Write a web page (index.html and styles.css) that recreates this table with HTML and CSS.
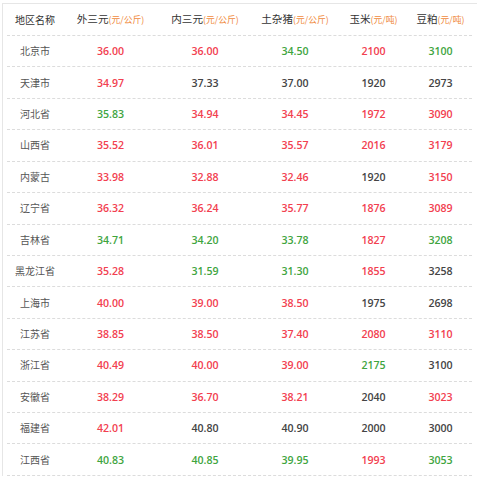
FILE: index.html
```html
<!DOCTYPE html>
<html lang="zh">
<head>
<meta charset="utf-8">
<title>价格</title>
<link rel="stylesheet" href="styles.css">
</head>
<body>
<div class="box">
  <div class="row head">
    <div class="c c1">地区名称</div>
    <div class="c c2">外三元<span class="u">(元/公斤)</span></div>
    <div class="c c3">内三元<span class="u">(元/公斤)</span></div>
    <div class="c c4">土杂猪<span class="u">(元/公斤)</span></div>
    <div class="c c5">玉米<span class="u">(元/吨)</span></div>
    <div class="c c6">豆粕<span class="u">(元/吨)</span></div>
  </div>
  <div class="row"><div class="c c1">北京市</div><div class="c c2 r">36.00</div><div class="c c3 r">36.00</div><div class="c c4 g">34.50</div><div class="c c5 r">2100</div><div class="c c6 g">3100</div></div>
  <div class="row"><div class="c c1">天津市</div><div class="c c2 r">34.97</div><div class="c c3 d">37.33</div><div class="c c4 d">37.00</div><div class="c c5 d">1920</div><div class="c c6 d">2973</div></div>
  <div class="row"><div class="c c1">河北省</div><div class="c c2 g">35.83</div><div class="c c3 r">34.94</div><div class="c c4 r">34.45</div><div class="c c5 r">1972</div><div class="c c6 r">3090</div></div>
  <div class="row"><div class="c c1">山西省</div><div class="c c2 r">35.52</div><div class="c c3 r">36.01</div><div class="c c4 r">35.57</div><div class="c c5 r">2016</div><div class="c c6 r">3179</div></div>
  <div class="row"><div class="c c1">内蒙古</div><div class="c c2 r">33.98</div><div class="c c3 r">32.88</div><div class="c c4 r">32.46</div><div class="c c5 d">1920</div><div class="c c6 r">3150</div></div>
  <div class="row"><div class="c c1">辽宁省</div><div class="c c2 r">36.32</div><div class="c c3 r">36.24</div><div class="c c4 r">35.77</div><div class="c c5 r">1876</div><div class="c c6 r">3089</div></div>
  <div class="row"><div class="c c1">吉林省</div><div class="c c2 g">34.71</div><div class="c c3 g">34.20</div><div class="c c4 g">33.78</div><div class="c c5 r">1827</div><div class="c c6 g">3208</div></div>
  <div class="row"><div class="c c1">黑龙江省</div><div class="c c2 r">35.28</div><div class="c c3 g">31.59</div><div class="c c4 g">31.30</div><div class="c c5 r">1855</div><div class="c c6 d">3258</div></div>
  <div class="row"><div class="c c1">上海市</div><div class="c c2 r">40.00</div><div class="c c3 r">39.00</div><div class="c c4 r">38.50</div><div class="c c5 d">1975</div><div class="c c6 d">2698</div></div>
  <div class="row"><div class="c c1">江苏省</div><div class="c c2 r">38.85</div><div class="c c3 r">38.50</div><div class="c c4 r">37.40</div><div class="c c5 r">2080</div><div class="c c6 r">3110</div></div>
  <div class="row"><div class="c c1">浙江省</div><div class="c c2 r">40.49</div><div class="c c3 r">40.00</div><div class="c c4 r">39.00</div><div class="c c5 g">2175</div><div class="c c6 d">3100</div></div>
  <div class="row"><div class="c c1">安徽省</div><div class="c c2 r">38.29</div><div class="c c3 r">36.70</div><div class="c c4 r">38.21</div><div class="c c5 d">2040</div><div class="c c6 r">3023</div></div>
  <div class="row"><div class="c c1">福建省</div><div class="c c2 r">42.01</div><div class="c c3 d">40.80</div><div class="c c4 d">40.90</div><div class="c c5 d">2000</div><div class="c c6 d">3000</div></div>
  <div class="row"><div class="c c1">江西省</div><div class="c c2 g">40.83</div><div class="c c3 g">40.85</div><div class="c c4 g">39.95</div><div class="c c5 r">1993</div><div class="c c6 g">3053</div></div>
</div>
</body>
</html>
```
FILE: styles.css
```css
html, body {
  margin: 0;
  padding: 0;
  background: #fff;
}
body {
  font-family: "Noto Sans CJK SC", "Noto Sans", sans-serif;
  color: #333;
}
.box {
  margin: 3px 0 0 2px;
  border-left: 1px solid #e6e6e6;
  border-top: 1px solid #e6e6e6;
  padding-left: 4px;
  width: 470px;
}
.row {
  display: flex;
  align-items: center;
  height: 31.43px;
  box-sizing: border-box;
  border-bottom: 1px dashed #dcdcdc;
  width: 465px;
}
.row.head {
  height: 32px;
}
.c {
  text-align: center;
  white-space: nowrap;
  font-size: 10.5px;
  line-height: 14px;
}
.c1 { width: 56px; color: #555; font-size: 10px; }
.c2 { width: 95px; }
.c3 { width: 94px; }
.c4 { width: 86px; }
.c5 { width: 71px; }
.c6 { width: 63px; }
.head .c { color: #333; font-size: 10.6px; font-weight: 400; }
.head .c1 { font-size: 10px; }
.u {
  color: #f08a3c;
  font-size: 8.8px;
}
.r, .g, .d {
  font-family: "Open Sans", "Noto Sans", sans-serif;
  font-weight: 600;
  font-size: 10.6px;
}
.r { color: #f2404f; }
.g { color: #3fa53f; }
.d { color: #444; }
```
